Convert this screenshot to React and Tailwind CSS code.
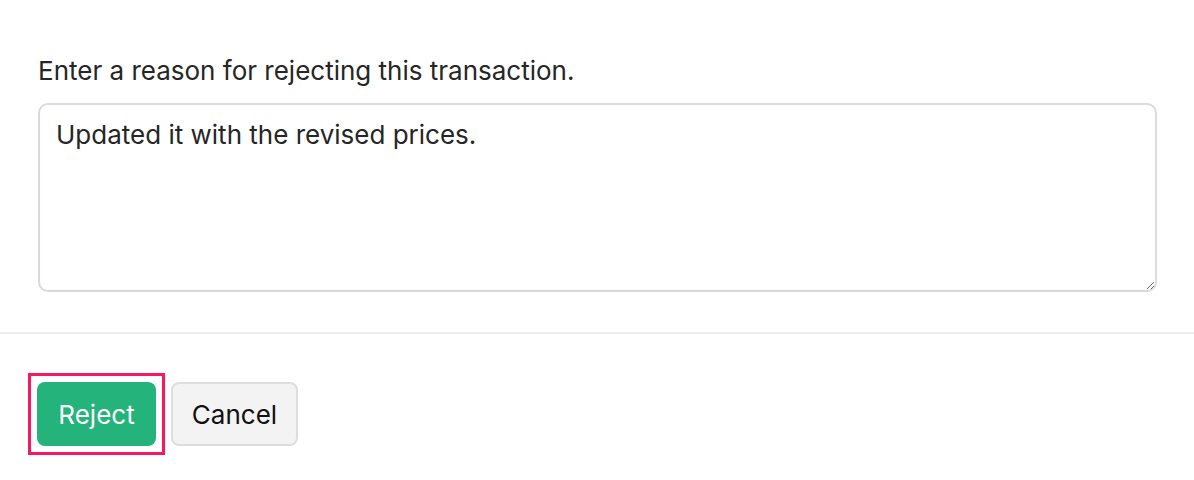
export default function App() {
  return (
    <div className="w-[1194px] h-[480px] bg-white font-['Inter','Liberation_Sans',sans-serif]">
      <div className="px-[38px] pt-[55px]">
        <p className="text-[26px] leading-[32px] text-[#262626]">Enter a reason for rejecting this transaction.</p>
        <textarea
          defaultValue="Updated it with the revised prices."
          className="mt-[16px] block w-[1119px] h-[189px] border-2 border-[#d9d8e4] rounded-[10px] px-[16px] py-[14px] text-[26px] leading-[32px] text-[#262626] outline-none"
        />
      </div>
      <div className="mt-[40px] border-t-2 border-[#ececec]" />
      <div className="flex items-center gap-[6px] pl-[28px] pt-[39px]">
        <div className="border-[3px] border-[#f5195f] p-[6px]">
          <button className="w-[119px] h-[64px] rounded-[8px] bg-[#23b37b] text-white text-[26px]">Reject</button>
        </div>
        <button className="w-[127px] h-[64px] rounded-[8px] bg-[#f3f3f3] border-2 border-[#dddddd] text-[#111] text-[26px]">Cancel</button>
      </div>
    </div>
  );
}
